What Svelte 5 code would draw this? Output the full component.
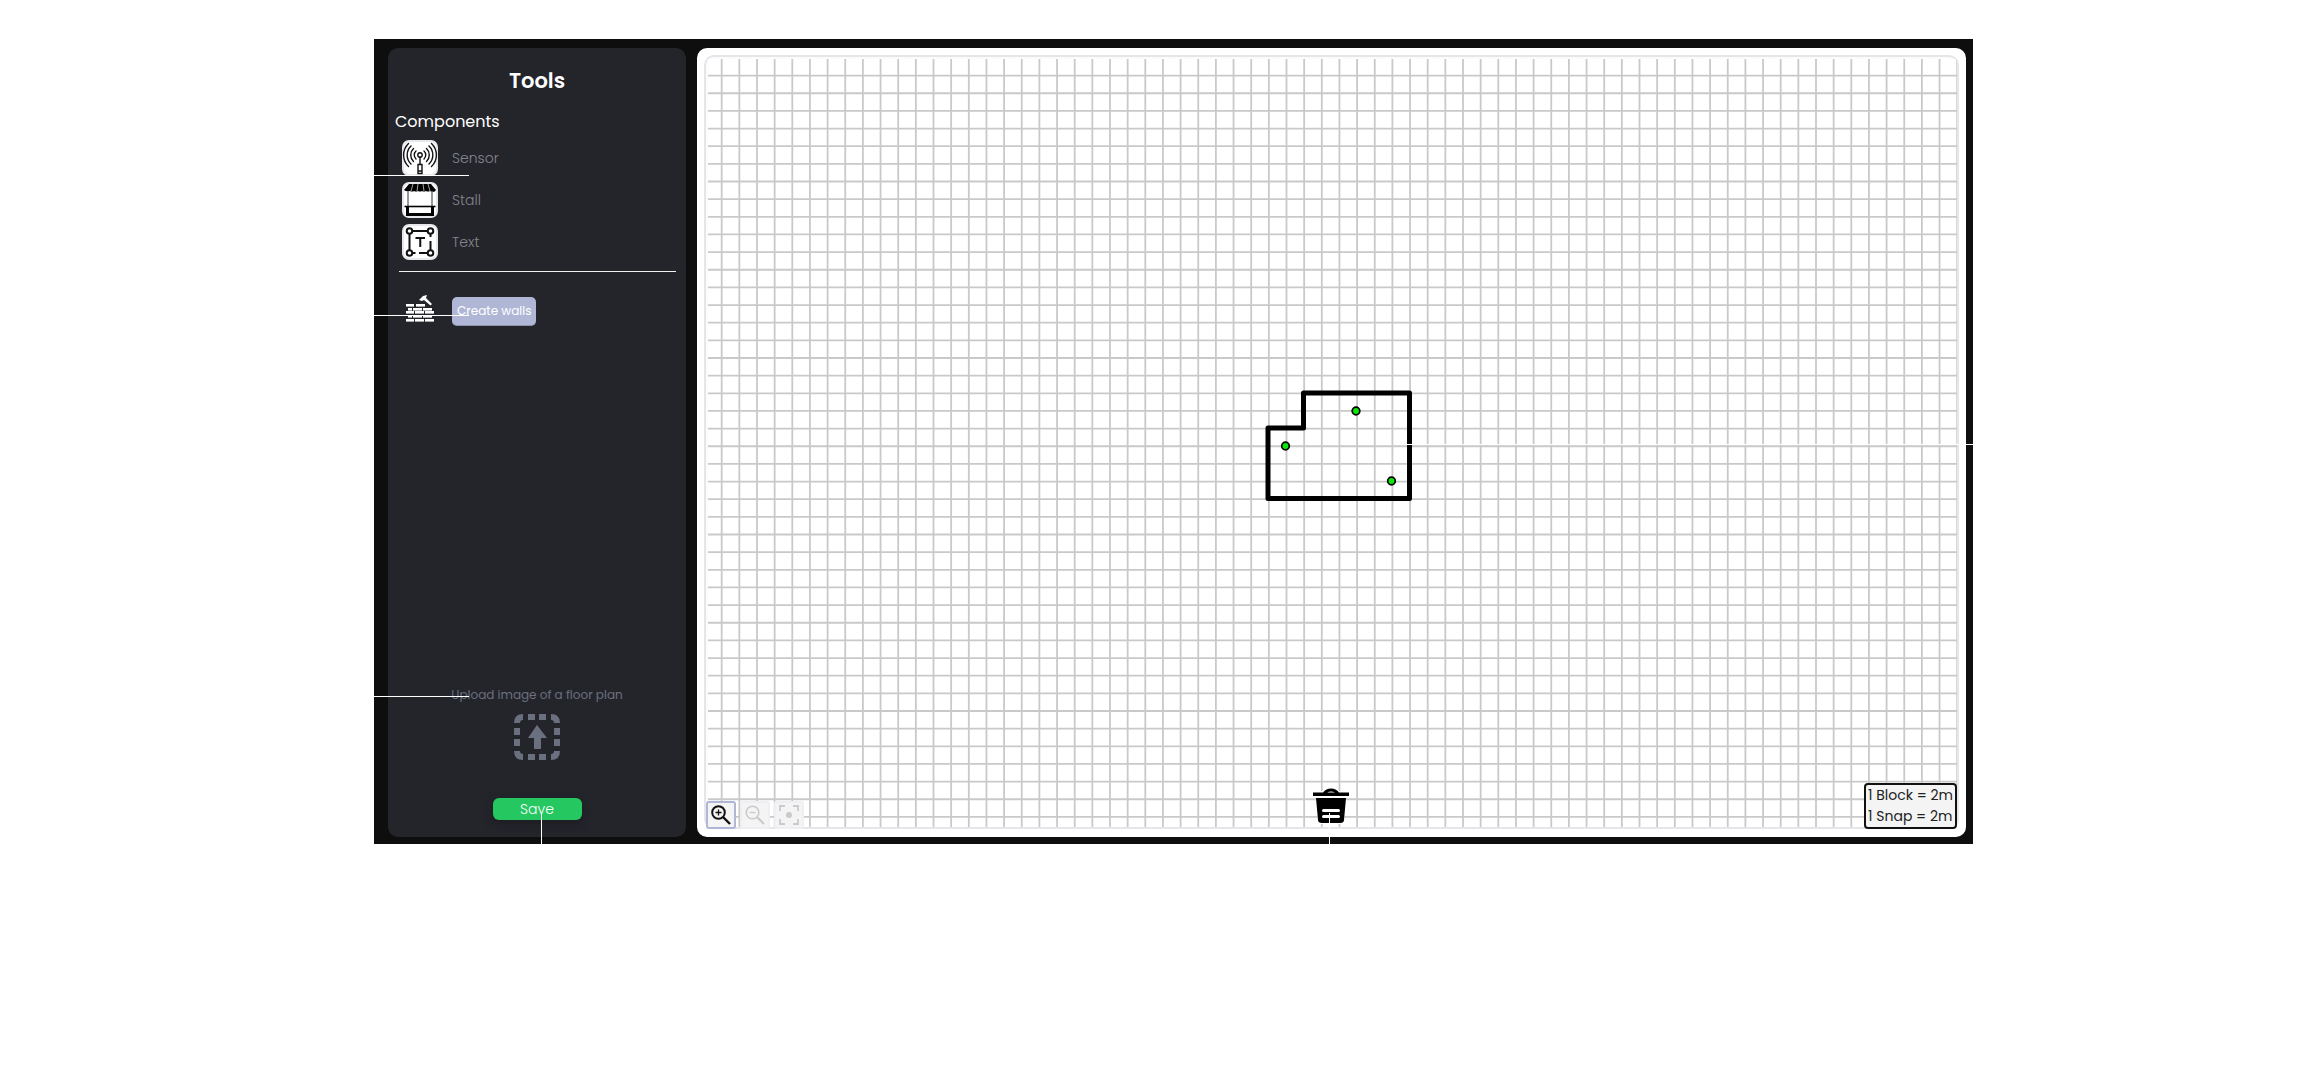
<script>
  const pitch = 17.65;
  const columns = Array.from({ length: 71 }, (_, i) => 13.7 + i * pitch);
  const rows = Array.from({ length: 43 }, (_, i) => 16.6 + i * pitch);
  const sensors = [
    { x: 648, y: 352 },
    { x: 577.5, y: 387 },
    { x: 683.5, y: 422 }
  ];
  const bricks = [
    [0, 9, 8], [10, 9, 9],
    [2, 13, 4], [7, 13, 9], [17, 13, 9],
    [0, 16, 8], [9, 16, 9], [19, 16, 9],
    [2, 20, 4], [7, 20, 9], [17, 20, 9],
    [0, 24, 8], [9, 24, 9], [19, 24, 9]
  ];
</script>

<div class="page">
  <main class="frame">
    <aside class="sidebar">
      <h1>Tools</h1>
      <h2>Components</h2>
      <ul class="components">
        <li>
          <svg class="tile" viewBox="0 0 36 36" aria-hidden="true">
            <rect x="1" y="1" width="34" height="34" rx="6" fill="#fff" stroke="#e5e7eb" stroke-width="2" />
            <g fill="none" stroke="#111" stroke-width="1.4" stroke-linecap="round">
              <circle cx="18" cy="15" r="2.2" />
              <path d="M18 17v7M16 24.500h4v9h-4zM16 31h4" />
              <path d="M14 19a5.500 5.500 0 0 1 0-8M22 19a5.500 5.500 0 0 0 0-8" />
              <path d="M11.500 21.500a9 9 0 0 1 0-13M24.500 21.500a9 9 0 0 0 0-13" />
              <path d="M9 24a12.500 12.500 0 0 1 0-18M27 24a12.500 12.500 0 0 0 0-18" />
              <path d="M6.500 26.500a16 16 0 0 1 0-23M29.500 26.500a16 16 0 0 0 0-23" />
            </g>
          </svg>
          <span>Sensor</span>
        </li>
        <li>
          <svg class="tile" viewBox="0 0 36 36" aria-hidden="true">
            <rect x="1" y="1" width="34" height="34" rx="6" fill="#fff" stroke="#e5e7eb" stroke-width="2" />
            <path d="M7 2h22l5 6q-1 2-3 2t-3-1q-2 1-4 0-2 1-4 0-2 1-4 0-2 1-4 0-2 1-4 0-4 1-6-1z" fill="#000" />
            <path d="M11 2l-2 7M16 2l-1 7M21 2l1 7M26 2l2 7" stroke="#ccc" stroke-width=".8" />
            <path d="M6 9v16M30 9v16" stroke="#777" stroke-width="1.500" />
            <path d="M2.500 24.500h31" stroke="#000" stroke-width="1.600" />
            <path d="M5.500 25v7.500h25V25" fill="none" stroke="#000" stroke-width="3" />
          </svg>
          <span>Stall</span>
        </li>
        <li>
          <svg class="tile" viewBox="0 0 36 36" aria-hidden="true">
            <rect x="1" y="1" width="34" height="34" rx="6" fill="#fff" stroke="#e5e7eb" stroke-width="2" />
            <g fill="none" stroke="#111" stroke-width="2">
              <circle cx="7.500" cy="7" r="2.800" /><circle cx="28.500" cy="7" r="2.800" />
              <circle cx="7.500" cy="29" r="2.800" /><circle cx="28.500" cy="29" r="2.800" />
              <path d="M10.500 7h15M7.500 10v16M28.500 10v3M28.500 17v9M10.500 29h3M17 29h8.500" />
              <path d="M13.500 14h9.500M18.250 14v9" />
            </g>
          </svg>
          <span>Text</span>
        </li>
      </ul>
      <hr />
      <div class="walls">
        <svg viewBox="0 0 28 27" aria-hidden="true">
          {#each bricks as [x, y, w]}
            <rect {x} {y} width={w} height="2.600" fill="#fff" />
          {/each}
          <path d="M13 5l4-4 4-1-1 3 6 6-1.500 1.500L18 5l-2 1z" fill="#fff" />
        </svg>
        <button type="button">Create walls</button>
      </div>
      <button type="button" class="upload">
        <span>Upload image of a floor plan</span>
        <svg viewBox="0 0 46 46" fill="#6b7080" aria-hidden="true">
          <path d="M0 9q0-9 9-9v6q-3 0-3 3zM37 0q9 0 9 9h-6q0-3-3-3zM46 37q0 9-9 9v-6q3 0 3-3zM9 46q-9 0-9-9h6q0 3 3 3z" />
          <path d="M14 0h7v6h-7zM25 0h7v6h-7zM14 40h7v6h-7zM25 40h7v6h-7zM0 14h6v7H0zM0 25h6v7H0zM40 14h6v7h-6zM40 25h6v7h-6z" />
          <path d="M23 11l10 13h-6v11h-7V24h-6z" />
        </svg>
      </button>
      <button type="button" class="save">Save</button>
    </aside>

    <section class="board" aria-label="Floor plan">
      <div class="plan">
        <svg class="grid" viewBox="0 0 1249 768" role="img" aria-label="Floor plan grid">
          <g stroke="#c9c9c9" stroke-width="1.800">
            {#each columns as x}<line x1={x} x2={x} y1="0" y2="768" />{/each}
            {#each rows as y}<line x1="0" x2="1249" y1={y} y2={y} />{/each}
          </g>
          <path d="M595.500 334H701.500V439.500H560V369H595.500Z" fill="none" stroke="#000" stroke-width="5" stroke-linejoin="round" />
          {#each sensors as s}
            <circle cx={s.x} cy={s.y} r="3.800" fill="#0be60b" stroke="#000" stroke-width="1.700" />
          {/each}
        </svg>
        <div class="zoom">
          <button type="button" class="active" aria-label="Zoom in">
            <svg viewBox="0 0 20 20" fill="none" stroke="currentColor"><circle cx="7.500" cy="7.500" r="6.300" stroke-width="2" /><path d="M12 12l7 7" stroke-width="2.400" /><path d="M4.500 7.500h6M7.500 4.500v6" stroke-width="1.300" /></svg>
          </button>
          <button type="button" disabled aria-label="Zoom out">
            <svg viewBox="0 0 20 20" fill="none" stroke="currentColor"><circle cx="7.500" cy="7.500" r="6.300" stroke-width="1.600" /><path d="M12 12l7 7" stroke-width="2.200" /><path d="M4.500 7.500h6" stroke-width="1.300" /></svg>
          </button>
          <button type="button" disabled aria-label="Center view">
            <svg viewBox="0 0 20 20" fill="none" stroke="currentColor" stroke-width="1.800"><path d="M1 6V1h5M14 1h5v5M19 14v5h-5M6 19H1v-5" /><circle cx="10" cy="10" r="3" fill="currentColor" stroke="none" /></svg>
          </button>
        </div>
        <button type="button" class="trash" aria-label="Delete">
          <svg viewBox="0 0 36 36">
            <path d="M3 3h30v6l-2 27H5L3 9z" fill="#fff" />
            <path d="M0 4.500h10q3-4 8-4t8 4h10V8H0zM14 4.500h8q-4-2-8 0z" fill="#000" fill-rule="evenodd" />
            <path d="M3 10h30l-2 22q0 3-4 3H9q-4 0-4-3z" fill="#000" />
            <path d="M10.500 22.500h15M10.500 28.500h15" stroke="#fff" stroke-width="3" stroke-linecap="round" />
          </svg>
        </button>
        <div class="scale"><span>1 Block = 2m</span><span>1 Snap = 2m</span></div>
      </div>
    </section>

    <i class="guide left first"></i>
    <i class="guide left second"></i>
    <i class="guide left third"></i>
    <i class="guide right"></i>
    <i class="guide down one"></i>
    <i class="guide down two"></i>
  </main>
</div>

<style>
  :global(body) { margin: 0; background: #fff; }
  .page {
    display: grid;
    grid-template-columns: 374fr 1599fr 348fr;
    padding-top: 39px;
    font-family: Poppins, Inter, "Open Sans", sans-serif;
  }
  .frame {
    grid-column: 2;
    position: relative;
    display: flex;
    gap: 11px;
    padding: 9px 7px 7px 14px;
    background: #0e0e0e;
  }
  button { font: inherit; cursor: pointer; }
  .sidebar {
    box-sizing: border-box;
    flex: 0 0 298px;
    display: flex;
    flex-direction: column;
    padding: 17px 10px;
    border-radius: 10px;
    background: #24252b;
    color: #fff;
  }
  h1 { margin: 0; font-size: 21px; line-height: 32px; font-weight: 600; text-align: center; }
  h2 { margin: 13px 0 6px; margin-left: -3px; font-size: 16px; line-height: 24px; font-weight: 400; }
  .components {
    display: grid;
    gap: 6px;
    margin: 0;
    padding: 0 4px;
    list-style: none;
    font-size: 14px;
    font-weight: 300;
    color: #85868b;
  }
  .components li { display: flex; align-items: center; gap: 14px; }
  .tile { width: 36px; height: 36px; }
  hr { width: 277px; height: 1px; margin: 11px 0 23px; border: 0; background: #f1f1f1; align-self: center; }
  .walls { display: flex; align-items: center; gap: 18px; padding-left: 8px; }
  .walls svg { width: 28px; height: 27px; margin-bottom: 5px; }
  .walls button {
    padding: 0 5px;
    border: 0;
    border-bottom: 1px solid #8c92ad;
    border-radius: 5px;
    background: #b0b7d6;
    color: #fff;
    font-size: 12px;
    line-height: 28px;
    white-space: nowrap;
  }
  .upload {
    display: flex;
    flex-direction: column;
    align-items: center;
    gap: 9px;
    margin: auto 0 38px;
    padding: 0;
    border: 0;
    background: none;
    color: #6b7080;
    font-size: 12px;
    line-height: 20px;
  }
  .upload svg { width: 46px; height: 46px; }
  .save {
    align-self: center;
    width: 89px;
    padding: 0;
    border: 0;
    border-radius: 6px;
    background: #25c761;
    box-shadow: 0 4px 8px #1c1d22;
    color: #fff;
    font-size: 14px;
    font-weight: 300;
    line-height: 22px;
  }
  .board {
    flex: 1;
    min-width: 0;
    padding: 7px 7px 8px;
    border-radius: 10px;
    background: #fff;
  }
  .plan {
    position: relative;
    padding: 2px 0 0 2px;
    border: 2px solid #e5e5ea;
    border-radius: 10px;
    background: #fbfbfb;
  }
  .grid { display: block; width: 100%; height: auto; background: #fff; }
  .zoom { position: absolute; left: 0; bottom: -2px; display: flex; gap: 4px; }
  .zoom button {
    box-sizing: border-box;
    display: grid;
    place-items: center;
    width: 30px;
    height: 28px;
    padding: 0;
    border: 2px solid #efeff3;
    border-radius: 3px;
    background: #f4f4f4;
    color: #cacaca;
  }
  .zoom button.active { border-color: #b0b7d6; color: #111; }
  .zoom svg { width: 20px; height: 20px; }
  .trash { position: absolute; left: calc(50% - 19px); bottom: 3px; padding: 0; border: 0; background: none; }
  .trash svg { display: block; width: 36px; height: 36px; }
  .scale {
    position: absolute;
    right: 0;
    bottom: -2px;
    display: grid;
    padding: 0 2px;
    border: 2px solid #111;
    border-radius: 4px;
    background: #f4f4f4;
    color: #222;
    font-size: 14px;
    font-weight: 400;
    line-height: 21px;
    white-space: nowrap;
  }
  .guide { position: absolute; background: #fff; }
  .left { left: 0; width: 95px; height: 1px; }
  .first { top: 136px; }
  .second { top: 276px; }
  .third { top: 657px; }
  .right { right: 0; top: 405px; width: 36%; height: 1px; }
  .down { bottom: 0; width: 1px; height: 31px; }
  .one { left: 167px; }
  .two { left: 955px; }
</style>
